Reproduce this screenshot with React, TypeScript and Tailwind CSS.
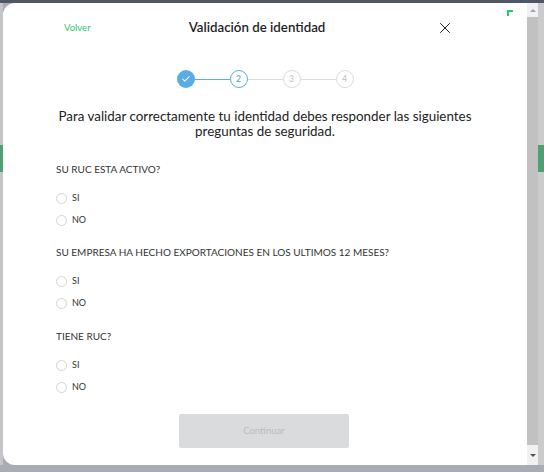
import { Check, X } from "lucide-react";

const preguntas = [
  { id: "ruc-activo", texto: "SU RUC ESTA ACTIVO?", mt: "mt-[23px]" },
  {
    id: "exportaciones",
    texto: "SU EMPRESA HA HECHO EXPORTACIONES EN LOS ULTIMOS 12 MESES?",
    mt: "mt-[14px]",
  },
  { id: "tiene-ruc", texto: "TIENE RUC?", mt: "mt-[15px]" },
];

function Stepper() {
  return (
    <div className="flex items-center justify-center mt-[32px]">
      <div className="w-[18px] h-[18px] rounded-full bg-[#5aade3] flex items-center justify-center text-white">
        <Check size={10} strokeWidth={2.5} />
      </div>
      <div className="w-[35px] h-px bg-[#5aade3]" />
      <div className="w-[18px] h-[18px] rounded-full border border-[#5aade3] flex items-center justify-center text-[8.5px] font-semibold text-[#5aade3]">
        2
      </div>
      <div className="w-[35px] h-px bg-[#dcdcdc]" />
      <div className="w-[18px] h-[18px] rounded-full border border-[#dcdcdc] flex items-center justify-center text-[8.5px] font-semibold text-[#c8c8c8]">
        3
      </div>
      <div className="w-[35px] h-px bg-[#dcdcdc]" />
      <div className="w-[18px] h-[18px] rounded-full border border-[#dcdcdc] flex items-center justify-center text-[8.5px] font-semibold text-[#c8c8c8]">
        4
      </div>
    </div>
  );
}

function Opcion({ label, first }: { label: string; first?: boolean }) {
  return (
    <label
      className={`flex items-center gap-[5px] h-[22px] ${first ? "mt-[11px]" : ""}`}
    >
      <span className="w-[11px] h-[11px] rounded-full border border-[#d4d4d4] bg-white" />
      <span className="text-[9px] text-[#333]">{label}</span>
    </label>
  );
}

function Scrollbar() {
  return (
    <div className="w-[11px] shrink-0 bg-[#f1f1f1] flex flex-col">
      <div className="h-[14px] flex items-center justify-center">
        <div className="w-0 h-0 border-x-[3px] border-x-transparent border-b-[3px] border-b-[#a3a3a3]" />
      </div>
      <div className="flex-1 bg-[#c1c1c1]" />
      <div className="h-[20px] flex items-center justify-center">
        <div className="w-0 h-0 border-x-[3px] border-x-transparent border-t-[3px] border-t-[#505050]" />
      </div>
    </div>
  );
}

export default function App() {
  return (
    <div
      className="w-[544px] h-[472px] flex flex-col bg-[#a9adb3] overflow-hidden"
      style={{ fontFamily: "Lato, 'Open Sans', sans-serif" }}
    >
      <div className="h-[3px] bg-[#4e5668]" />
      <div className="h-[462px] flex">
        <div className="w-[3px] bg-[#c4c5c7] flex flex-col">
          <div className="h-[142px]" />
          <div className="h-[27px] bg-[#4fa070]" />
        </div>

        <div className="w-[535px] bg-white rounded-l-[12px] flex overflow-hidden">
          <div className="flex-1 relative">
            <div className="absolute left-[504px] top-[7px] w-[6px] h-[6px] border-t-2 border-l-2 border-[#1fcf63]" />

            <div className="pt-[15px]">
              <div className="ml-[61px] w-[386px] h-[20px] grid grid-cols-[1fr_auto_1fr] items-center">
                <span className="text-[9.5px] text-[#35c46d]">Volver</span>
                <h2 className="text-[13.3px] font-semibold text-[#1e1e1e]">
                  Validación de identidad
                </h2>
                <div className="flex justify-end text-[#1a1a1a]">
                  <X size={18} strokeWidth={1.3} className="-mr-[4px]" />
                </div>
              </div>

              <Stepper />

              <p className="mt-[21px] text-center text-[13.4px] leading-[15px] text-[#222] px-[40px]">
                Para validar correctamente tu identidad debes responder las
                siguientes
                <br />
                preguntas de seguridad.
              </p>

              <div className="pl-[53px]">
                {preguntas.map((p) => (
                  <div key={p.id} className={p.mt}>
                    <p className="text-[10px] leading-[14px] text-[#333]">
                      {p.texto}
                    </p>
                    <Opcion label="SI" first />
                    <Opcion label="NO" />
                  </div>
                ))}
              </div>

              <div className="mt-[16px] flex justify-center">
                <button className="ml-[-2px] w-[170px] h-[34px] rounded-[2px] bg-[#d9dbdd] text-[9.5px] text-[#b9bcbf]">
                  Continuar
                </button>
              </div>
            </div>
          </div>
          <Scrollbar />
        </div>

        <div className="w-[6px] bg-[#c9cbcd] flex flex-col">
          <div className="h-[142px]" />
          <div className="h-[27px] bg-[#4fa070]" />
        </div>
      </div>
      <div className="flex-1 bg-[#a9adb3]" />
    </div>
  );
}
